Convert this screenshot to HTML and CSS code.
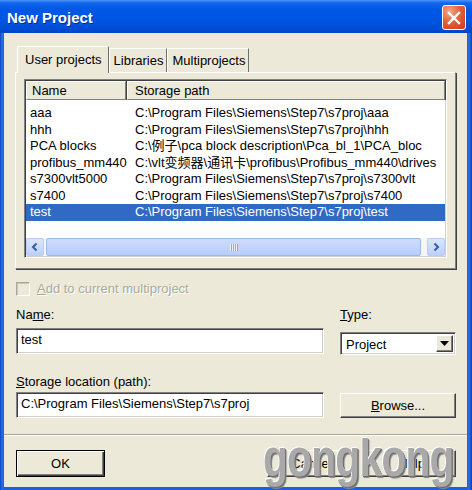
FILE: index.html
```html
<!DOCTYPE html>
<html>
<head>
<meta charset="utf-8">
<link rel="stylesheet" href="styles.css">
</head>
<body>
<div class="window">
  <div class="titlebar">
    <span class="title">New Project</span>
    <span class="close"><svg width="14" height="14" viewBox="0 0 14 14"><path d="M2 2 L12 12 M12 2 L2 12" stroke="#fff" stroke-width="2.4" stroke-linecap="square"/></svg></span>
  </div>
  <div class="client">
    <div class="tabs">
      <div class="tabstrip">
        <div class="tab active">User projects</div>
        <div class="tab">Libraries</div>
        <div class="tab">Multiprojects</div>
      </div>
      <div class="panel">
        <div class="listview">
          <div class="lv-header">
            <div class="hcell hname">Name</div>
            <div class="hcell hpath">Storage path</div>
          </div>
          <div class="lv-rows">
            <div class="row"><span class="c1">aaa</span><span class="c2">C:\Program Files\Siemens\Step7\s7proj\aaa</span></div>
            <div class="row"><span class="c1">hhh</span><span class="c2">C:\Program Files\Siemens\Step7\s7proj\hhh</span></div>
            <div class="row"><span class="c1">PCA blocks</span><span class="c2">C:\例子\pca block description\Pca_bl_1\PCA_bloc</span></div>
            <div class="row"><span class="c1">profibus_mm440</span><span class="c2">C:\vlt变频器\通讯卡\profibus\Profibus_mm440\drives</span></div>
            <div class="row"><span class="c1">s7300vlt5000</span><span class="c2">C:\Program Files\Siemens\Step7\s7proj\s7300vlt</span></div>
            <div class="row"><span class="c1">s7400</span><span class="c2">C:\Program Files\Siemens\Step7\s7proj\s7400</span></div>
            <div class="row selected"><span class="c1">test</span><span class="c2">C:\Program Files\Siemens\Step7\s7proj\test</span></div>
          </div>
          <div class="hscroll">
            <div class="sbtn"><svg width="10" height="10" viewBox="0 0 10 10"><path d="M6.5 1.5 L3 5 L6.5 8.5" fill="none" stroke="#3b5aa8" stroke-width="2"/></svg></div>
            <div class="thumb"><span class="grip"></span></div>
            <div class="sbtn"><svg width="10" height="10" viewBox="0 0 10 10"><path d="M3.5 1.5 L7 5 L3.5 8.5" fill="none" stroke="#3b5aa8" stroke-width="2"/></svg></div>
          </div>
        </div>
      </div>
    </div>

    <div class="checkrow">
      <span class="checkbox"></span>
      <span class="checklabel"><u>A</u>dd to current multiproject</span>
    </div>

    <div class="form">
      <div class="lbl">Na<u>m</u>e:</div>
      <div class="lbl"><u>T</u>ype:</div>
      <div class="field">test</div>
      <div class="select"><span>Project</span><span class="dropbtn"><svg width="9" height="5" viewBox="0 0 9 5"><path d="M0 0 H9 L4.5 5 Z" fill="#000"/></svg></span></div>
      <div class="lbl lbl2"><u>S</u>torage location (path):</div>
      <div></div>
      <div class="field field2">C:\Program Files\Siemens\Step7\s7proj</div>
      <div class="button browse"><span><u>B</u>rowse...</span></div>
    </div>

    <div class="sep"></div>

    <div class="buttons">
      <div class="button default"><span>OK</span></div>
      <div class="spacer"></div>
      <div class="button"><span>Cancel</span></div>
      <div class="button"><span>Help</span></div>
    </div>
  </div>
  <div class="watermark">gongkong</div>
</div>
</body>
</html>
```

FILE: styles.css
```css
*, *::before, *::after {
  box-sizing: border-box;
}
html, body {
  margin: 0;
  padding: 0;
  background: #1c5fe0;
}
body {
  width: 472px;
  height: 490px;
  overflow: hidden;
  font-family: "Liberation Sans", "Noto Sans CJK SC", sans-serif;
  font-size: 13px;
  color: #000;
}
.window {
  position: relative;
  width: 472px;
  height: 490px;
  display: flex;
  flex-direction: column;
  background: linear-gradient(to right, #0a43c9 0, #2a6fe8 2px, #1c5fe0 4px, #1c5fe0 467px, #2a6fe8 469px, #0a3cbb 472px);
}
.titlebar {
  height: 33px;
  flex: none;
  display: flex;
  align-items: center;
  padding: 0 6px 0 7px;
  background: linear-gradient(#4b96fb 0, #1264ec 3px, #0058e6 9px, #0055e2 20px, #004ed8 28px, #0043c4 33px);
}
.title {
  flex: 1;
  color: #fff;
  font-weight: bold;
  font-size: 15px;
  text-shadow: 1px 1px 0 #0a2a9a;
  padding-top: 1px;
}
.close {
  width: 24px;
  height: 25px;
  border: 1px solid #fff;
  border-radius: 3px;
  margin-top: 2px;
  display: flex;
  align-items: center;
  justify-content: center;
  background: radial-gradient(circle at 30% 25%, #f6a98f 0, #e4603a 45%, #c93c1b 100%);
}
.client {
  flex: 1;
  margin: 0 5px 3px 4px;
  background: #ece9d8;
  padding: 13px 11px 0 11px;
  display: flex;
  flex-direction: column;
}

/* tabs */
.tabstrip {
  height: 26px;
  display: flex;
  align-items: flex-end;
  padding-left: 2px;
}
.tab {
  height: 24px;
  line-height: 23px;
  padding: 0 3px 0 4px;
  border-top: 1px solid #fff;
  border-left: 1px solid #fff;
  border-right: 1px solid #6e6e6e;
  background: #ece9d8;
}
.tab.active {
  height: 27px;
  line-height: 25px;
  padding: 0 6px 0 7px;
  margin-bottom: -1px;
  position: relative;
  z-index: 1;
}
.panel {
  height: 197px;
  border-top: 1px solid #fff;
  border-left: 1px solid #fff;
  border-right: 1px solid #808080;
  border-bottom: 1px solid #808080;
  box-shadow: 1px 1px 0 #404040;
  padding: 6px 8px 0 8px;
}
.listview {
  height: 179px;
  border: 1px solid;
  border-color: #808080 #fff #fff #808080;
  box-shadow: inset 1px 1px 0 #404040, inset -1px -1px 0 #d4d0c8;
  padding: 1px;
  background: #fff;
  display: flex;
  flex-direction: column;
  overflow: hidden;
}
.lv-header {
  display: flex;
  height: 19px;
  flex: none;
}
.hcell {
  height: 19px;
  line-height: 17px;
  background: #ece9d8;
  border-top: 1px solid #fff;
  border-left: 1px solid #fff;
  border-right: 1px solid #808080;
  border-bottom: 1px solid #808080;
  box-shadow: 1px 0 0 #404040;
}
.hname {
  width: 100px;
  padding-left: 5px;
}
.hpath {
  flex: 1;
  margin-left: 1px;
  padding-left: 7px;
}
.lv-rows {
  padding-top: 5px;
}
.row {
  display: flex;
  height: 16.5px;
  line-height: 16px;
  white-space: nowrap;
}
.c1 {
  width: 109px;
  padding-left: 4px;
  flex: none;
}
.c2 {
  flex: none;
}
.row.selected {
  background: #316ac5;
  color: #fff;
}
.hscroll {
  margin-top: auto;
  height: 18px;
  flex: none;
  display: flex;
  align-items: stretch;
  background: #f7f6f1;
}
.sbtn {
  width: 18px;
  border: 1px solid #b8cdf6;
  border-radius: 2px;
  background: linear-gradient(#dbe6fd, #bdd0fa);
  display: flex;
  align-items: center;
  justify-content: center;
}
.thumb {
  flex: 1;
  margin: 0 6px 0 2px;
  border: 1px solid #9fb8ea;
  border-radius: 2px;
  background: linear-gradient(#cfdcfc, #b8cdfa);
  display: flex;
  align-items: center;
  justify-content: center;
}
.grip {
  width: 8px;
  height: 7px;
  background: repeating-linear-gradient(to right, #eef3fe 0 1px, #8ea8e0 1px 2px);
}

/* checkbox */
.checkrow {
  margin-top: 12px;
  margin-left: 1px;
  display: flex;
  align-items: center;
  height: 15px;
}
.checkbox {
  width: 14px;
  height: 14px;
  border: 1px solid;
  border-color: #aca899 #fff #fff #aca899;
  box-shadow: inset 1px 1px 0 #c9c6b8;
  background: #ece9d8;
}
.checklabel {
  margin-left: 7px;
  color: #aca899;
  text-shadow: 1px 1px 0 #fff;
}

/* form */
.form {
  margin-top: 11px;
  margin-left: 1px;
  display: grid;
  grid-template-columns: 308px 116px;
  column-gap: 16px;
}
.lbl {
  height: 15px;
  line-height: 15px;
}
.lbl2 {
  margin-top: 19px;
}
.field {
  margin-top: 6px;
  height: 26px;
  border: 1px solid;
  border-color: #808080 #fff #fff #808080;
  box-shadow: inset 1px 1px 0 #404040, inset -1px -1px 0 #d4d0c8;
  background: #fff;
  padding: 3px 4px;
  line-height: 16px;
}
.field2 {
  margin-top: 3px;
}
.select {
  margin-top: 10px;
  height: 23px;
  border: 1px solid;
  border-color: #808080 #fff #fff #808080;
  box-shadow: inset 1px 1px 0 #404040, inset -1px -1px 0 #d4d0c8;
  background: #fff;
  display: flex;
  align-items: center;
  padding: 2px 2px 2px 5px;
  line-height: 17px;
}
.select span:first-child {
  flex: 1;
  padding-top: 1px;
}
.dropbtn {
  width: 17px;
  height: 17px;
  background: #ece9d8;
  border: 1px solid;
  border-color: #fff #404040 #404040 #fff;
  box-shadow: inset -1px -1px 0 #808080;
  display: flex;
  align-items: center;
  justify-content: center;
}
.button {
  height: 25px;
  background: #ece9d8;
  border: 1px solid;
  border-color: #fff #404040 #404040 #fff;
  box-shadow: inset -1px -1px 0 #808080;
  display: flex;
  align-items: center;
  justify-content: center;
}
.browse {
  margin-top: 4px;
}
.sep {
  margin: 16px -11px 0 -11px;
  height: 2px;
  background: #aca899;
  border-bottom: 1px solid #fff;
}
.buttons {
  margin-top: 14px;
  margin-left: 1px;
  display: flex;
  gap: 11px;
}
.buttons .button {
  width: 89px;
  height: 27px;
}
.buttons .spacer {
  flex: 1;
}
.button.default {
  border: 1px solid #000;
  box-shadow: inset 1px 1px 0 #fff, inset -1px -1px 0 #404040, inset -2px -2px 0 #808080;
}

.watermark {
  position: absolute;
  left: 263px;
  top: 431px;
  width: 200px;
  font-family: "Liberation Sans", sans-serif;
  font-weight: bold;
  font-size: 51px;
  line-height: 56px;
  letter-spacing: -1px;
  color: #a9a9a9;
  transform: scaleX(0.8);
  transform-origin: left top;
  text-shadow: -1px -1px 0 #fff, 1px 1px 0 #6b6b6b, 2px 2px 1px #8a8a8a;
  white-space: nowrap;
}
```
